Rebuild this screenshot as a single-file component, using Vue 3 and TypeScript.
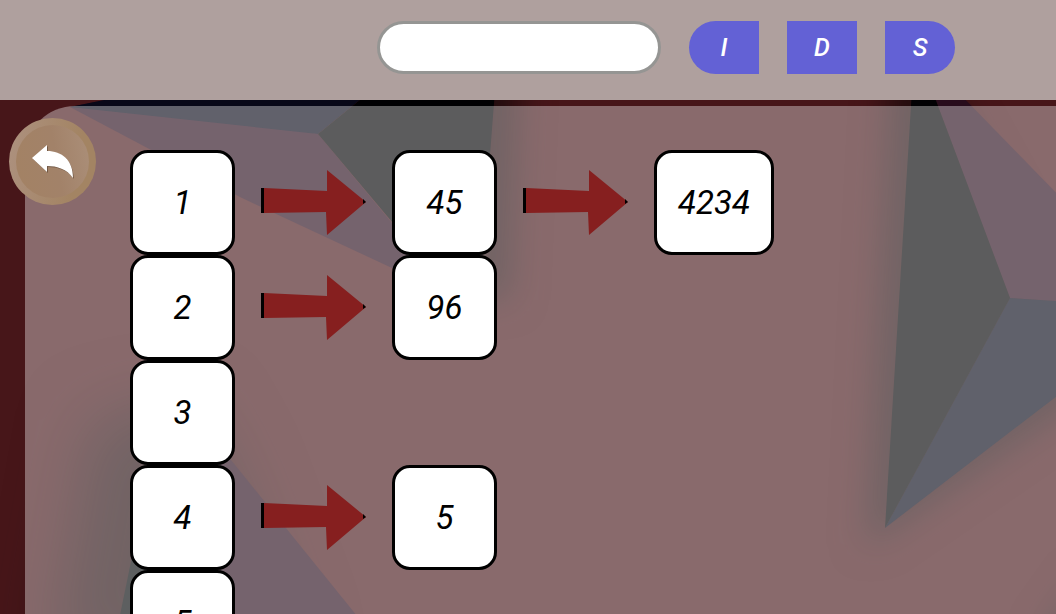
<script setup lang="ts">
import { ref } from 'vue'

const entry = ref('')
const rows: number[][] = [[1, 45, 4234], [2, 96], [3], [4, 5], [5]]
const actions = [
  { label: 'I', title: 'Insert' },
  { label: 'D', title: 'Delete' },
  { label: 'S', title: 'Search' },
]
</script>

<template>
  <div class="page">
    <svg class="backdrop" viewBox="0 0 1056 614" preserveAspectRatio="xMidYMid slice" aria-hidden="true">
      <defs>
        <filter id="shade" x="-50%" y="-50%" width="200%" height="200%" color-interpolation-filters="sRGB">
          <feGaussianBlur stdDeviation="17" />
        </filter>
        <filter id="shade-wide" x="-50%" y="-50%" width="200%" height="200%" color-interpolation-filters="sRGB">
          <feGaussianBlur stdDeviation="32" />
        </filter>
        <filter id="edge" x="-5%" y="-5%" width="110%" height="110%" color-interpolation-filters="sRGB">
          <feGaussianBlur stdDeviation="0.7" />
        </filter>
      </defs>
      <rect width="1056" height="614" fill="#471619" />
      <g filter="url(#shade)" fill="#220c0e">
        <path d="M380 60H520L510 300L450 300Z" />
        <path d="M892 40L930 60L1100 370L1080 400L866 548Z" />
        <path d="M1040 640L1090 570V660Z" />
      </g>
      <path d="M92 420L190 400L230 470L300 660H50Z" fill="#220c0e" filter="url(#shade-wide)" />
      <g filter="url(#edge)">
        <path d="M70 107L110 99L318 134L456 300L392 268L240 197Z" fill="#280c1c" />
        <path d="M70 107L114 98L150 90H372L318 134Z" fill="#080818" />
        <path d="M372 90H495L478 310L456 298L318 134Z" fill="#010103" />
        <path d="M932 90H956L1070 207V302L1010 298Z" fill="#280c1c" />
        <path d="M1010 298L1070 302V386L885 528Z" fill="#070818" />
        <path d="M912 90H932L1010 298L885 528Z" fill="#010103" />
        <path d="M200 422L235 465L370 632H160Z" fill="#280c1c" />
        <path d="M160 420L118 625H190L210 440Z" fill="#030607" />
      </g>
    </svg>

    <header class="toolbar">
      <input v-model="entry" class="entry" type="text" aria-label="Value" />
      <button v-for="a in actions" :key="a.label" class="action" type="button" :aria-label="a.title">{{ a.label }}</button>
    </header>

    <main class="panel">
      <button class="back" type="button" aria-label="Back">
        <span class="disc">
          <svg viewBox="0 0 73 73" aria-hidden="true">
            <path d="M17 34L32 21V27C47 27 57 36 58 54C52 45 42 42 32 42V48Z" fill="#5b4534" opacity=".7" />
            <path d="M16 33L31 20V26C46 26 57 35 57 53C51 44 41 41 31 41V47Z" fill="#fff" />
          </svg>
        </span>
      </button>
      <div class="table">
        <div v-for="row in rows" :key="row[0]" class="row">
          <template v-for="(value, i) in row" :key="i">
            <svg v-if="i > 0" class="arrow" viewBox="0 0 105 105" aria-hidden="true">
              <path d="M0 38H3L66 41V20L105 52L66 85L65 62L3 63H0Z" fill="#861f1f" />
              <path d="M0 38H3V63H0ZM102 49L105 52L102 54Z" fill="#000" />
            </svg>
            <div class="cell">{{ value }}</div>
          </template>
        </div>
      </div>
    </main>
  </div>
</template>

<style>
body {
  margin: 0;
  background: #471619;
}
</style>

<style scoped>
.page {
  position: relative;
  display: flex;
  flex-direction: column;
  height: 100vh;
  overflow: hidden;
  font-family: Roboto, "Liberation Sans", sans-serif;
}
.backdrop {
  position: absolute;
  inset: 0;
  width: 100%;
  height: 100%;
}
.toolbar {
  position: relative;
  display: flex;
  flex: none;
  align-items: center;
  justify-content: flex-end;
  gap: 28px;
  height: 100px;
  padding: 0 101px 5px 0;
  box-sizing: border-box;
  background: #afa09e;
}
.entry {
  box-sizing: border-box;
  width: 284px;
  height: 53px;
  padding: 0 24px;
  border: 3px solid #959593;
  border-radius: 27px;
  background: #fff;
  font: italic 25px Roboto, sans-serif;
  outline: none;
}
.action {
  width: 70px;
  height: 53px;
  padding: 0;
  border: 0;
  background: #6361d5;
  color: #fff;
  font: italic 500 25px Roboto, sans-serif;
}
.action:first-of-type {
  border-radius: 27px 0 0 27px;
}
.action:last-of-type {
  border-radius: 0 27px 27px 0;
}
.panel {
  position: relative;
  flex: 1;
  min-height: 0;
  margin: 6px 0 0 25px;
  border-top-left-radius: 50px;
  background: rgba(255, 255, 255, 0.36);
}
.back {
  position: absolute;
  top: 12px;
  left: -16px;
  display: grid;
  place-items: center;
  width: 87px;
  height: 87px;
  padding: 0;
  border: 0;
  border-radius: 50%;
  background: linear-gradient(100deg, #ad917f, #a38463 75%);
}
.disc {
  width: 73px;
  height: 73px;
  border-radius: 50%;
  background: linear-gradient(80deg, #a38264, #a28269 55%, #ab8f79);
}
.disc svg {
  display: block;
  width: 100%;
  height: 100%;
}
.table {
  padding: 44px 0 0 105px;
}
.row {
  display: flex;
  gap: 26px;
}
.arrow {
  flex: none;
  width: 105px;
  height: 105px;
}
.cell {
  box-sizing: border-box;
  flex: none;
  display: flex;
  align-items: center;
  justify-content: center;
  min-width: 105px;
  height: 105px;
  padding: 0 21px;
  border: 3px solid #000;
  border-radius: 18px;
  background: #fff;
  color: #000;
  font-size: 33px;
  font-style: italic;
}
</style>
